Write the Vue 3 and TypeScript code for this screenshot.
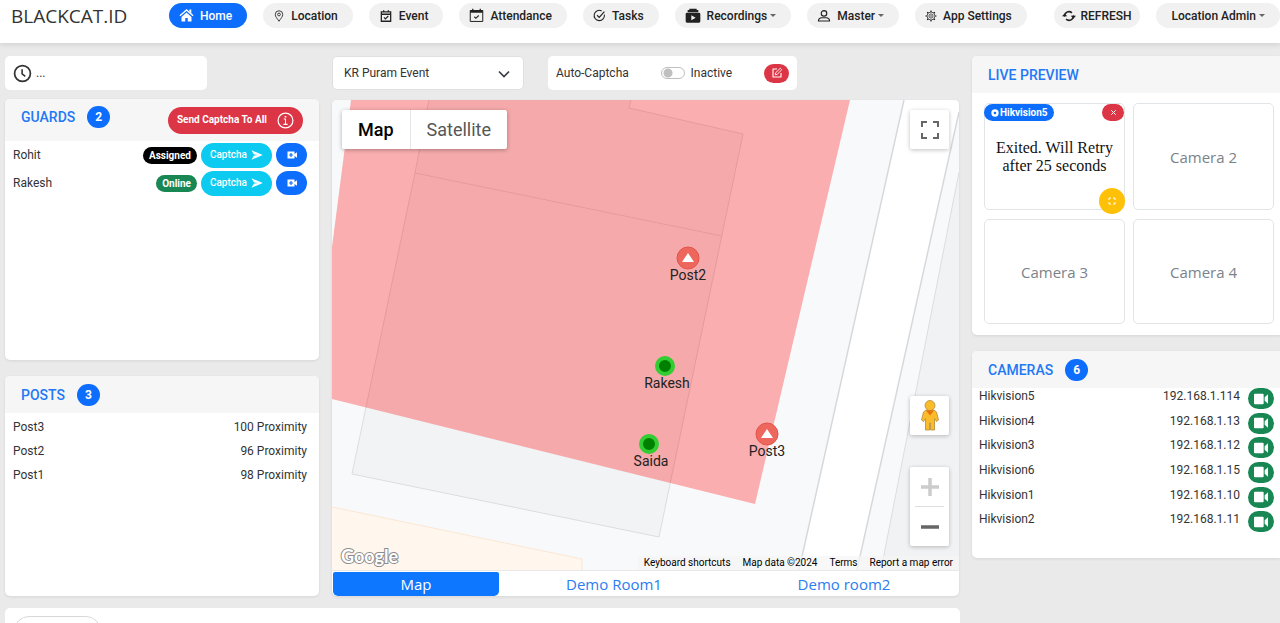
<script lang="ts">
import { defineComponent, h } from 'vue'
import type { PropType } from 'vue'

export interface Shape { d: string; w?: number }

export const AppIcon = defineComponent({
  props: {
    shapes: { type: Array as PropType<Shape[]>, required: true },
    size: { type: Number, required: true },
  },
  setup(props) {
    return () =>
      h(
        'svg',
        { width: props.size, height: props.size, viewBox: '0 0 24 24', 'aria-hidden': 'true' },
        props.shapes.map((s) =>
          h('path', {
            d: s.d,
            fill: s.w ? 'none' : 'currentColor',
            'fill-rule': 'evenodd',
            stroke: s.w ? 'currentColor' : 'none',
            'stroke-width': s.w ?? 0,
          }),
        ),
      )
  },
})
</script>

<script setup lang="ts">
import { ref } from 'vue'

interface NavItem { label: string; icon: string; size: number; caret?: boolean; active?: boolean }

const icons: Record<string, Shape[]> = {
  home: [
    { d: 'M12 7.2 4 14.2V21.5h6v-5.5h4v5.5h6v-7.3z' },
    { d: 'M1.5 12.5 12 3.2l10.5 9.3', w: 2.2 },
    { d: 'M16.5 2.5h3.2v6.3l-3.2-2.8z' },
  ],
  pin: [
    { d: 'M12 22.5C8.5 17 4.5 13.5 4.5 9a7.5 7.5 0 0 1 15 0c0 4.5-4 8-7.5 13.5z', w: 1.7 },
    { d: 'M12 6.2a2.8 2.8 0 1 0 0 5.6 2.8 2.8 0 0 0 0-5.6z', w: 1.7 },
  ],
  event: [
    { d: 'M4 5h16v16H4zM4 9h16M8 2v4M16 2v4', w: 2.2 },
    { d: 'M8.5 14.5l2.5 2.5 5-5', w: 2 },
  ],
  attendance: [
    { d: 'M2 4h20v17.5H2z', w: 1.6 },
    { d: 'M2 3h20v4.5H2zM5 1h2v3H5zM17 1h2v3h-2z' },
    { d: 'M8.5 14l2.5 2.5 4.5-4.5', w: 1.8 },
  ],
  tasks: [
    { d: 'M21 10.5A9.5 9.5 0 1 1 16 3.5', w: 2 },
    { d: 'M7.5 11.5l4 4L21 5', w: 2.2 },
  ],
  recordings: [
    { d: 'M6.5 1h11v2h-11zM4 3h16v3.5H4z' },
    { d: 'M3 7h18a2 2 0 0 1 2 2V20a2 2 0 0 1-2 2H3a2 2 0 0 1-2-2V9a2 2 0 0 1 2-2zm6.500 4v7.500l6.500-3.750z' },
  ],
  user: [
    { d: 'M12 2.8a4.7 4.7 0 1 0 0 9.4 4.7 4.7 0 0 0 0-9.4z', w: 2 },
    { d: 'M2.5 20.5c0-4 3.5-5.5 6-5.5h7c2.5 0 6 1.5 6 5.5z', w: 2 },
  ],
  gear: [
    { d: 'M12 4a8 8 0 1 0 0 16 8 8 0 0 0 0-16z', w: 1.5 },
    { d: 'M12 7.8a4.2 4.2 0 1 0 0 8.4 4.2 4.2 0 0 0 0-8.4z', w: 1.5 },
    { d: 'M12 1v3M12 20v3M1 12h3M20 12h3M4.2 4.2l2.2 2.2M17.6 17.6l2.2 2.2M19.8 4.2l-2.2 2.2M6.4 17.6l-2.2 2.2', w: 2.4 },
    { d: 'M12 10.8a1.2 1.2 0 1 0 0 2.4 1.2 1.2 0 0 0 0-2.4z', w: 1 },
  ],
  refresh: [
    { d: 'M4.5 13A7.5 7.5 0 0 1 17 6.5M19.5 11A7.5 7.5 0 0 1 7 17.5', w: 2.8 },
    { d: 'M0 12.500h9L4.500 7.500zM15 11.500h9l-4.500 5z' },
  ],
  clock: [
    { d: 'M12 2a10 10 0 1 0 0 20 10 10 0 0 0 0-20z', w: 2.2 },
    { d: 'M11.5 6.5V12.5l4 3', w: 2 },
  ],
  edit: [
    { d: 'M12 4H4v16h16v-8', w: 2.2 },
    { d: 'M8.5 15.5l.8-4L18.5 2.5l3 3-9.2 9.2z', w: 1.8 },
  ],
  info: [
    { d: 'M12 1.5a10.5 10.5 0 1 0 0 21 10.5 10.5 0 0 0 0-21z', w: 1.7 },
    { d: 'M9.5 10h2.5v7.5M9 17.5h6', w: 1.5 },
    { d: 'M10.8 5.5h2.4v2.4h-2.4z' },
  ],
  send: [{ d: 'M1 2.5 23.5 12 1 21.5 5.5 13.3 15 12 5.5 10.7z' }],
  videoAdd: [{ d: 'M3 5h14v5l5-3.500v11L17 14v5H3zM8.800 8v2.800H6v2.400h2.800V16h2.400v-2.800H14v-2.400h-2.800V8z' }],
  video: [{ d: 'M3 4h11.500a1.500 1.500 0 0 1 1.500 1.500v13a1.500 1.500 0 0 1-1.500 1.500H3a1.500 1.500 0 0 1-1.500-1.500v-13A1.500 1.500 0 0 1 3 4zM22.500 5v14L17.500 14.500v-5z' }],
  record: [{ d: 'M12 1a11 11 0 1 0 0 22 11 11 0 0 0 0-22zm0 7a4 4 0 1 1 0 8 4 4 0 0 1 0-8z' }],
  close: [{ d: 'M4 4l16 16M20 4 4 20', w: 3.2 }],
  expand: [{ d: 'M3 9V3h6M15 3h6v6M21 15v6h-6M9 21H3v-6', w: 3 }],
}

const nav: NavItem[] = [
  { label: 'Home', icon: 'home', size: 15, active: true },
  { label: 'Location', icon: 'pin', size: 12 },
  { label: 'Event', icon: 'event', size: 14 },
  { label: 'Attendance', icon: 'attendance', size: 15 },
  { label: 'Tasks', icon: 'tasks', size: 13 },
  { label: 'Recordings', icon: 'recordings', size: 16, caret: true },
  { label: 'Master', icon: 'user', size: 14, caret: true },
  { label: 'App Settings', icon: 'gear', size: 12 },
]

const guards = [
  { name: 'Rohit', status: 'Assigned', kind: 'assigned' },
  { name: 'Rakesh', status: 'Online', kind: 'online' },
]
const posts = [
  { name: 'Post3', proximity: 100 },
  { name: 'Post2', proximity: 96 },
  { name: 'Post1', proximity: 98 },
]
const cameras = [
  { name: 'Hikvision5', ip: '192.168.1.114' },
  { name: 'Hikvision4', ip: '192.168.1.13' },
  { name: 'Hikvision3', ip: '192.168.1.12' },
  { name: 'Hikvision6', ip: '192.168.1.15' },
  { name: 'Hikvision1', ip: '192.168.1.10' },
  { name: 'Hikvision2', ip: '192.168.1.11' },
]
const postMarkers = [
  { label: 'Post2', x: 356, y: 158 },
  { label: 'Post3', x: 435, y: 334 },
]
const guardMarkers = [
  { label: 'Rakesh', x: 333, y: 266 },
  { label: 'Saida', x: 317, y: 344 },
]
const mapLinks = ['Keyboard shortcuts', 'Map data ©2024', 'Terms', 'Report a map error']
const tabs = ['Map', 'Demo Room1', 'Demo room2']

const activeTab = ref('Map')
const event = ref('KR Puram Event')
const autoCaptcha = ref(false)
</script>

<template>
  <div class="page">
    <header class="topbar">
      <a class="brand" href="#">BLACKCAT.ID</a>
      <nav class="nav">
        <a v-for="n in nav" :key="n.label" href="#" class="pill" :class="{ active: n.active }">
          <AppIcon :shapes="icons[n.icon]" :size="n.size" />
          <span>{{ n.label }}<i v-if="n.caret" class="caret"></i></span>
        </a>
      </nav>
      <div class="account">
        <button class="pill refresh" type="button"><AppIcon :shapes="icons.refresh" :size="14" /><span>REFRESH</span></button>
        <button class="pill admin" type="button"><span>Location Admin<i class="caret"></i></span></button>
      </div>
    </header>

    <main class="columns">
      <section class="column">
        <div class="box time"><AppIcon :shapes="icons.clock" :size="19" /><span>...</span></div>
        <div class="card guards">
          <div class="card-head tall">
            <h2>GUARDS</h2><span class="count">2</span>
            <button class="send-all" type="button">Send Captcha To All <AppIcon :shapes="icons.info" :size="17" /></button>
          </div>
          <ul class="guard-list">
            <li v-for="g in guards" :key="g.name">
              <span class="name">{{ g.name }}</span>
              <span class="badge" :class="g.kind">{{ g.status }}</span>
              <button class="captcha" type="button">Captcha <AppIcon :shapes="icons.send" :size="12" /></button>
              <button class="call" type="button" :aria-label="`Video call ${g.name}`"><AppIcon :shapes="icons.videoAdd" :size="12" /></button>
            </li>
          </ul>
        </div>
        <div class="card posts">
          <div class="card-head"><h2>POSTS</h2><span class="count">3</span></div>
          <table class="post-table">
            <tbody>
              <tr v-for="p in posts" :key="p.name"><td>{{ p.name }}</td><td>{{ p.proximity }} Proximity</td></tr>
            </tbody>
          </table>
        </div>
      </section>

      <section class="column center">
        <div class="tools">
          <div class="select-wrap">
            <select v-model="event" aria-label="Event"><option>KR Puram Event</option></select>
            <svg width="12" height="12" viewBox="0 0 12 12" aria-hidden="true"><path d="M1 3.5l5 5 5-5" fill="none" stroke="#343a40" stroke-width="1.6" /></svg>
          </div>
          <div class="box auto">
            <span>Auto-Captcha</span>
            <label class="switch"><input v-model="autoCaptcha" type="checkbox" role="switch" /><span>{{ autoCaptcha ? 'Active' : 'Inactive' }}</span></label>
            <button class="edit" type="button" aria-label="Edit auto captcha"><AppIcon :shapes="icons.edit" :size="12" /></button>
          </div>
        </div>
        <div class="card map-card">
          <div class="map">
            <svg class="map-canvas" viewBox="0 0 627 470" preserveAspectRatio="xMidYMid slice" role="img" aria-label="Site map">
              <rect width="627" height="470" fill="#f8f9fb" />
              <path d="M572 0H627V12L525 470H467z" fill="#fff" />
              <path d="M627 72 595 235 549 470H627z" fill="#f1f2f4" />
              <path d="M572 0 467 470M627 12 525 470" fill="none" stroke="#d6d9dc" stroke-width="1.5" />
              <path d="M627 72 595 235 549 470" fill="none" stroke="#dbdddf" />
              <path d="M0 407 250 459V470H0z" fill="#fff6ee" />
              <path d="M0 407 250 459V470" fill="none" stroke="#fbe7d2" />
              <path d="M97 0 83 73 20 374 327 437 411 34 297 8 299 0z" fill="#f1f3f4" />
              <path d="M97 0 83 73 20 374 327 437 411 34 297 8 299 0M83 73 390 136" fill="none" stroke="#dcdddf" />
              <path d="M19 0H518L423 404 0 299V147z" fill="#ff0000" fill-opacity=".3" />
              <g v-for="m in postMarkers" :key="m.label">
                <circle :cx="m.x" :cy="m.y" r="11" fill="#ee675c" stroke="#e0554c" />
                <path :d="`M${m.x} ${m.y - 5}l6 9h-12z`" fill="#fff" />
                <text :x="m.x" :y="m.y + 22" class="marker-label">{{ m.label }}</text>
              </g>
              <g v-for="m in guardMarkers" :key="m.label">
                <circle :cx="m.x" :cy="m.y" r="8" fill="#008000" stroke="#32cd32" stroke-width="4" />
                <text :x="m.x + 2" :y="m.y + 22" class="marker-label">{{ m.label }}</text>
              </g>
            </svg>
            <div class="map-type">
              <button type="button" class="on">Map</button><button type="button">Satellite</button>
            </div>
            <button type="button" class="map-btn full" aria-label="Toggle fullscreen"><svg width="18" height="18" viewBox="0 0 18 18"><path d="M1 6V1h5M12 1h5v5M17 12v5h-5M6 17H1v-5" fill="none" stroke="#666" stroke-width="2" /></svg></button>
            <button type="button" class="map-btn pegman" aria-label="Street View">
              <svg width="18" height="31" viewBox="0 0 18 31"><path d="M5 10h8l2.500 2 2 8-2 1.500-2-3V30H9.500v-7h-1v7H4.500V18.500l-2 3L.5 20l2-8z" fill="#fbbc2c" stroke="#b28a3c" stroke-width=".8" /><circle cx="9" cy="5.500" r="5" fill="#fbbc2c" stroke="#b28a3c" stroke-width=".8" /><path d="M5 10.500h8L9 15.500z" fill="#e8710a" /></svg>
            </button>
            <div class="zoom">
              <button type="button" aria-label="Zoom in"><svg width="18" height="18" viewBox="0 0 18 18"><path d="M9 0v18M0 9h18" stroke="#ccc" stroke-width="3.5" /></svg></button>
              <button type="button" aria-label="Zoom out"><svg width="18" height="18" viewBox="0 0 18 18"><path d="M0 9h18" stroke="#666" stroke-width="3.5" /></svg></button>
            </div>
            <svg class="google" width="62" height="26" viewBox="0 0 62 26"><text x="3" y="20">Google</text></svg>
            <div class="attribution"><a v-for="l in mapLinks" :key="l" href="#">{{ l }}</a></div>
          </div>
          <div class="tabs" role="tablist">
            <button v-for="t in tabs" :key="t" type="button" role="tab" :aria-selected="t === activeTab" :class="{ on: t === activeTab }" @click="activeTab = t">{{ t }}</button>
          </div>
        </div>
      </section>

      <section class="column right">
        <div class="card preview">
          <div class="card-head"><h2>LIVE PREVIEW</h2></div>
          <div class="feeds">
            <div class="feed live">
              <span class="feed-name"><AppIcon :shapes="icons.record" :size="8" />Hikvision5</span>
              <button class="feed-close" type="button" aria-label="Close feed"><AppIcon :shapes="icons.close" :size="7" /></button>
              <p>Exited. Will Retry after 25 seconds</p>
              <button class="feed-expand" type="button" aria-label="Expand feed"><AppIcon :shapes="icons.expand" :size="8" /></button>
            </div>
            <div v-for="n in [2, 3, 4]" :key="n" class="feed">Camera {{ n }}</div>
          </div>
        </div>
        <div class="card cameras">
          <div class="card-head"><h2>CAMERAS</h2><span class="count">6</span></div>
          <table class="camera-table">
            <tbody>
              <tr v-for="c in cameras" :key="c.name">
                <td>{{ c.name }}</td><td>{{ c.ip }}</td>
                <td><button type="button" :aria-label="`View ${c.name}`"><AppIcon :shapes="icons.video" :size="16" /></button></td>
              </tr>
            </tbody>
          </table>
        </div>
      </section>
    </main>

    <section class="bottom"><button type="button" aria-label="Filter"></button></section>
  </div>
</template>

<style>
body { background: #eaeaea; }
</style>

<style scoped>
* { box-sizing: border-box; }
.page { min-height: 100vh; display: flex; flex-direction: column; background: #eaeaea; color: #333; font: 12px/16px Roboto, "Liberation Sans", sans-serif; overflow: hidden; }
svg { flex: none; }
button { border: 0; padding: 0; font: inherit; color: inherit; background: none; display: flex; align-items: center; justify-content: center; cursor: pointer; }
a { color: inherit; text-decoration: none; }
h2, p, ul { margin: 0; padding: 0; }

.topbar { display: flex; align-items: flex-start; height: 43px; padding-top: 3px; background: #fff; box-shadow: 0 2px 5px rgba(0, 0, 0, .1); }
.brand { width: 169px; padding-left: 11px; font: 19px/27px "Open Sans", "Noto Sans", sans-serif; color: #333; flex: none; }
.nav, .account { display: flex; gap: 16px; }
.account { margin-left: auto; }
.pill { display: flex; align-items: center; gap: 6px; height: 25px; padding: 0 15px 0 10px; border-radius: 13px; background: #f1f1f1; color: #222; font-weight: 500; white-space: nowrap; }
.pill.active { background: #0d6efd; color: #fff; }
.pill.refresh { padding: 0 8px; gap: 4px; }
.pill.admin { padding: 0 15px 0 16px; }
.caret { display: inline-block; margin-left: 3px; border: 3px solid transparent; border-top-color: #666; border-bottom: 0; vertical-align: 3px; }

.columns { display: grid; grid-template-columns: 314fr 627fr 308fr; gap: 13px; padding: 13px 0 0 5px; }
.column { display: flex; flex-direction: column; min-width: 0; }
.box { display: flex; align-items: center; height: 34px; border-radius: 5px; background: #fff; }
.card { border-radius: 5px; background: #fff; box-shadow: 0 1px 3px rgba(0, 0, 0, .09); overflow: hidden; }
.card-head { display: flex; align-items: center; gap: 12px; height: 37px; padding: 0 16px; background: #f6f6f6; }
.card-head h2 { font-size: 14px; line-height: 20px; font-weight: 500; color: #2379f5; }
.card-head.tall { height: 42px; padding-bottom: 6px; }
.count { width: 23px; height: 22px; border-radius: 11px; background: #0d6efd; color: #fff; font-weight: 700; line-height: 22px; text-align: center; }

.time { align-self: flex-start; width: 202px; padding-left: 8px; gap: 4px; }
.guards { min-height: 261px; margin-top: 9px; }
.send-all { height: 27px; margin: 6px 0 0 auto; padding: 0 9px; gap: 10px; border-radius: 14px; background: #dc3545; color: #fff; font-size: 10px; font-weight: 700; }
.guard-list { list-style: none; padding: 0 12px 0 8px; }
.guard-list li { display: flex; align-items: center; height: 28px; gap: 4px; }
.name { margin-right: auto; }
.badge { padding: 0 6px; border-radius: 9px; color: #fff; font-size: 10px; font-weight: 700; line-height: 17px; }
.assigned { background: #000; }
.online { background: #198754; }
.captcha { height: 25px; padding: 0 9px; gap: 4px; border-radius: 13px; background: #0dcaf0; color: #fff; font-size: 10px; font-weight: 500; }
.call { width: 31px; height: 24px; border-radius: 12px; background: #0d6efd; color: #fff; }
.posts { flex: 1; min-height: 219px; margin-top: 16px; }
table { width: 100%; border-collapse: collapse; }
td { padding: 0; }
.post-table { margin-top: 2px; }
.post-table td { height: 24px; }
.post-table td:first-child { padding-left: 8px; }
.post-table td:last-child { padding-right: 12px; text-align: right; }

.tools { display: flex; gap: 24px; }
.select-wrap { position: relative; width: 192px; height: 34px; }
.select-wrap select { appearance: none; width: 100%; height: 34px; padding: 0 11px; border: 1px solid #e0e0e0; border-radius: 5px; background: #fff; color: #333; font: inherit; }
.select-wrap svg { position: absolute; right: 14px; top: 12px; pointer-events: none; }
.auto { width: 249px; justify-content: space-between; padding: 0 8px; }
.switch { display: flex; align-items: center; gap: 6px; }
.switch input { appearance: none; width: 24px; height: 12px; margin: 0; border: 1px solid #bfbfbf; border-radius: 6px; background: radial-gradient(circle at 6px 5px, #bfbfbf 4px, #fff 5px); }
.switch input:checked { background: #0d6efd; }
.edit { width: 25px; height: 19px; border-radius: 10px; background: #dc3545; color: #fff; }
.map-card { margin-top: 10px; }
.map { position: relative; aspect-ratio: 627 / 470; }
.map-canvas { display: block; width: 100%; height: 100%; }
.marker-label { font: 14px Roboto, sans-serif; fill: #222; text-anchor: middle; }
.map-type { position: absolute; left: 10px; top: 10px; display: flex; background: #fff; border-radius: 2px; box-shadow: 0 1px 4px rgba(0, 0, 0, .3); }
.map-type button { height: 39px; padding: 0 16px; font-size: 18px; color: #565656; }
.map-type .on { color: #000; font-weight: 500; border-right: 1px solid #e6e6e6; }
.map-btn, .zoom { position: absolute; right: 10px; width: 39px; background: #fff; border-radius: 2px; box-shadow: 0 1px 4px rgba(0, 0, 0, .25); }
.map-btn { height: 39px; }
.full { top: 10px; }
.pegman { bottom: 135px; }
.zoom { bottom: 24px; padding: 0 5px; }
.zoom button { width: 100%; height: 39px; }
.zoom button + button { height: 40px; border-top: 1px solid #e0e0e0; }
.google { position: absolute; left: 6px; bottom: 1px; }
.google text { font: 700 18px Lato, sans-serif; fill: #fff; stroke: #8c8c8c; stroke-width: 2px; paint-order: stroke; }
.attribution { position: absolute; right: 0; bottom: 0; display: flex; font-size: 10px; line-height: 14px; color: #000; }
.attribution a { padding: 0 6px; background: rgba(245, 245, 245, .7); }
.tabs { display: flex; padding: 1px 0 0 1px; border-top: 1px solid #e8e8e8; }
.tabs button { flex: 230; height: 24px; color: #2b7cf0; font: 15px/24px "Open Sans", "Noto Sans", sans-serif; }
.tabs .on { flex: 166; border-radius: 2px 2px 5px 5px; background: #0d78ff; color: #fff; }

.right .card { border-top-right-radius: 0; border-bottom-right-radius: 0; }
.feeds { display: grid; grid-template-columns: 1fr 1fr; grid-template-rows: 107px 105px; gap: 9px 8px; padding: 10px 6px 11px 12px; }
.feed { position: relative; display: flex; align-items: center; justify-content: center; border: 1px solid #e2e5e8; border-radius: 5px; color: #7b828a; font: 15px/20px "Open Sans", "Noto Sans", sans-serif; }
.feed p { padding: 0 8px; font: 16px/18px "Liberation Serif", serif; color: #111; text-align: center; }
.feed-name { position: absolute; left: -1px; top: 0; display: flex; align-items: center; gap: 1px; height: 17px; padding: 0 6px 0 7px; border-radius: 9px; background: #0d6efd; color: #fff; font: 700 10px/17px Roboto, sans-serif; }
.feed-close { position: absolute; right: 0; top: 0; width: 22px; height: 17px; border-radius: 9px; background: #dc3545; color: #fff; }
.feed-expand { position: absolute; right: -1px; bottom: -5px; width: 26px; height: 26px; border-radius: 13px; background: #ffc107; color: #fff; }
.cameras { min-height: 207px; margin-top: 16px; }
.camera-table { height: 148px; }
.camera-table td { vertical-align: top; }
.camera-table td:first-child { padding-left: 7px; }
.camera-table td:nth-child(2) { padding-right: 8px; text-align: right; }
.camera-table td:last-child { width: 32px; padding-right: 6px; }
.camera-table button { width: 26px; height: 21px; border-radius: 11px; background: #198754; color: #fff; }

.bottom { flex: 1 0 15px; height: 15px; width: calc(75% - 5px); margin: 12px 0 0 5px; padding: 8px 9px 0; border-radius: 5px 5px 0 0; background: #fff; overflow: hidden; }
.bottom button { width: 87px; height: 30px; border: 1px solid #d8d8d8; border-radius: 15px; }
</style>
